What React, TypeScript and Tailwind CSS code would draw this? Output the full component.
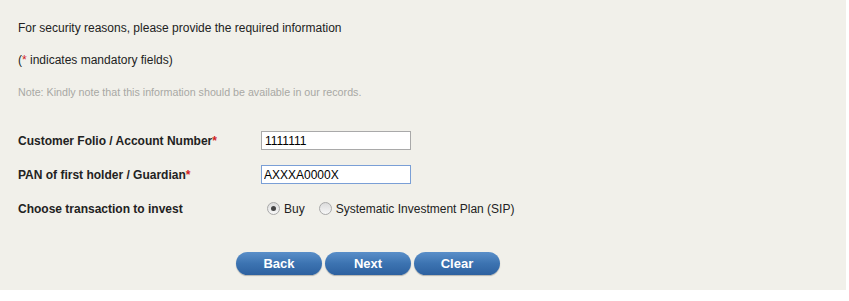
import { useState } from "react"

const font = { fontFamily: '"Liberation Sans", Arial, sans-serif' }

function Radio({ checked }: { checked?: boolean }) {
  return (
    <span className="inline-flex h-[13px] w-[13px] items-center justify-center rounded-full border border-[#a9a9a9] bg-gradient-to-b from-[#dcdcdc] to-[#f7f7f7]">
      {checked && <span className="h-[5px] w-[5px] rounded-full bg-[#444]" />}
    </span>
  )
}

function PillButton({ label }: { label: string }) {
  return (
    <button className="h-[23px] w-[86px] rounded-full bg-gradient-to-b from-[#5a8fc9] via-[#3c73b1] to-[#2d61a0] text-[13px] font-bold text-white shadow-[0_1px_1px_rgba(0,0,0,0.25)]">
      {label}
    </button>
  )
}

export default function App() {
  const [folio, setFolio] = useState("1111111")
  const [pan, setPan] = useState("AXXXA0000X")
  const [txn, setTxn] = useState("buy")

  return (
    <div className="h-[301px] w-[849px] bg-white" style={font}>
      <div className="h-[290px] w-[846px] bg-[#f1f0ea] pl-[18px] pt-[20px] text-[12px] text-[#222]">
        <p className="h-[16px] leading-[16px]">For security reasons, please provide the required information</p>
        <p className="mt-[16px] h-[16px] leading-[16px]">
          (<span className="text-[#d21f1f]">*</span> indicates mandatory fields)
        </p>
        <p className="mt-[16px] h-[16px] text-[10.7px] leading-[16px] text-[#a8a8a4]">
          Note: Kindly note that this information should be available in our records.
        </p>

        <div className="mt-[31px] flex flex-col gap-[15px] font-bold">
          <div className="flex h-[19px] items-center">
            <label className="w-[243px]">
              Customer Folio / Account Number<span className="text-[#d21f1f]">*</span>
            </label>
            <input
              value={folio}
              onChange={(e) => setFolio(e.target.value)}
              className="h-[19px] w-[150px] border border-[#a9a9a9] bg-white px-[3px] text-[12px] font-normal text-black outline-none"
            />
          </div>
          <div className="flex h-[19px] items-center">
            <label className="w-[243px]">
              PAN of first holder / Guardian<span className="text-[#d21f1f]">*</span>
            </label>
            <input
              value={pan}
              onChange={(e) => setPan(e.target.value)}
              className="h-[19px] w-[150px] border border-[#7a9fd6] bg-white px-[2px] text-[12px] font-normal text-black outline-none"
            />
          </div>
          <div className="flex h-[19px] items-center">
            <label className="w-[249px]">Choose transaction to invest</label>
            <div className="flex items-center font-normal">
              <button onClick={() => setTxn("buy")} className="flex items-center gap-[4px]">
                <Radio checked={txn === "buy"} />
                <span>Buy</span>
              </button>
              <button onClick={() => setTxn("sip")} className="ml-[14px] flex items-center gap-[4px]">
                <Radio checked={txn === "sip"} />
                <span>Systematic Investment Plan (SIP)</span>
              </button>
            </div>
          </div>
        </div>

        <div className="ml-[218px] mt-[34px] flex gap-[3px]">
          <PillButton label="Back" />
          <PillButton label="Next" />
          <PillButton label="Clear" />
        </div>
      </div>
    </div>
  )
}
